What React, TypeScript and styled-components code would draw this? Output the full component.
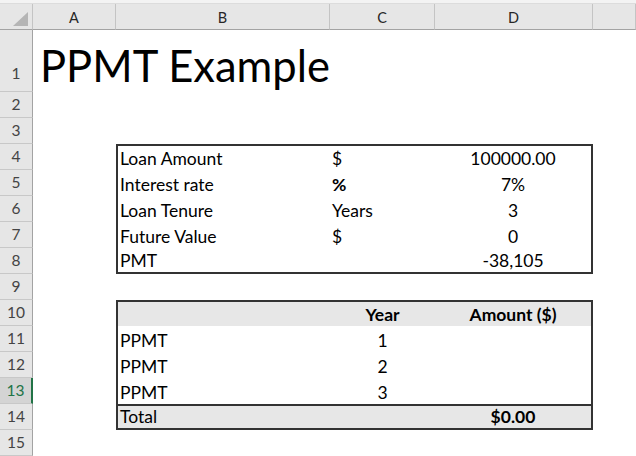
import React from 'react';
import styled, { createGlobalStyle } from 'styled-components';

const GlobalStyle = createGlobalStyle`
  html, body { margin: 0; padding: 0; background: #fff; overflow: hidden; }
  body { font-family: Lato, "Open Sans", sans-serif; }
  * { box-sizing: border-box; }
`;

const Sheet = styled.div`
  display: grid;
  grid-template-columns: 33px 83px 214px 105px 158px 1fr;
  grid-template-rows: 4px 26px 62px repeat(14, 26px);
  width: 636px;
  height: 456px;
  overflow: hidden;
  background: #fff;
`;

const TopStrip = styled.div`
  grid-column: 1 / -1;
  grid-row: 1;
  background: #f3f3f3;
  border-bottom: 1px solid #dcdcdc;
`;

const Corner = styled.div`
  grid-column: 1;
  grid-row: 2;
  background: #e6e6e6;
  border-right: 1px solid #c4c4c4;
  border-bottom: 1px solid #a3a3a3;
  display: flex;
  align-items: flex-end;
  justify-content: flex-end;
  padding: 0 4px 3px 0;
`;

const ColHead = styled.div<{ $col: number }>`
  grid-column: ${(p) => p.$col};
  grid-row: 2;
  background: #e6e6e6;
  border-right: 1px solid #c4c4c4;
  border-bottom: 1px solid #a3a3a3;
  display: flex;
  align-items: center;
  justify-content: center;
  font-size: 14.5px;
  color: #262626;
  padding-top: 1px;
`;

const RowHead = styled.div<{ $row: number; $selected?: boolean }>`
  grid-column: 1;
  grid-row: ${(p) => p.$row + 2};
  background: ${(p) => (p.$selected ? '#d4d4d4' : '#e6e6e6')};
  border-right: ${(p) => (p.$selected ? '2px solid #217346' : '1px solid #a3a3a3')};
  border-bottom: 1px solid #c8c8c8;
  display: flex;
  align-items: ${(p) => (p.$row === 1 ? 'flex-end' : 'center')};
  justify-content: center;
  padding-bottom: ${(p) => (p.$row === 1 ? '8px' : '0')};
  font-size: 15.5px;
  line-height: 1.2;
  color: ${(p) => (p.$selected ? '#217346' : '#444')};
`;

const Title = styled.h1`
  grid-column: 2 / span 3;
  grid-row: 3;
  margin: 0;
  display: flex;
  align-items: flex-end;
  padding: 0 0 1px 7px;
  font-size: 43.5px;
  font-weight: 400;
  line-height: 1.2;
  white-space: nowrap;
  color: #000;
`;

const Table = styled.div<{ $row: number }>`
  grid-column: 3 / span 3;
  grid-row: ${(p) => p.$row + 2} / span 5;
  border: 2px solid #333;
  display: grid;
  grid-template-columns: 212px 105px 156px;
  grid-template-rows: 24px 26px 26px 26px 24px;
`;

const Cell = styled.div<{ $align?: 'left' | 'center'; $bold?: boolean; $shade?: boolean; $topRule?: boolean }>`
  display: flex;
  align-items: flex-end;
  justify-content: ${(p) => (p.$align === 'center' ? 'center' : 'flex-start')};
  padding: 0 2px 1px 2px;
  font-size: 17.5px;
  line-height: 1.2;
  font-weight: ${(p) => (p.$bold ? 700 : 400)};
  background: ${(p) => (p.$shade ? '#e7e7e7' : 'transparent')};
  border-top: ${(p) => (p.$topRule ? '2px solid #333' : 'none')};
  color: #000;
  white-space: nowrap;
`;

const CornerMark = () => (
  <svg width="15" height="14" viewBox="0 0 15 14">
    <polygon points="0,14 15,14 15,0" fill="#b5b5b5" />
  </svg>
);

const info: [string, string, string, boolean?][] = [
  ['Loan Amount', '$', '100000.00'],
  ['Interest rate', '%', '7%', true],
  ['Loan Tenure', 'Years', '3'],
  ['Future Value', '$', '0'],
  ['PMT', '', '-38,105'],
];

export default function App() {
  const rows = Array.from({ length: 15 }, (_, i) => i + 1);
  return (
    <>
      <GlobalStyle />
      <Sheet>
        <TopStrip />
        <Corner>
          <CornerMark />
        </Corner>
        {['A', 'B', 'C', 'D', ''].map((c, i) => (
          <ColHead key={i} $col={i + 2}>{c}</ColHead>
        ))}
        {rows.map((r) => (
          <RowHead key={r} $row={r} $selected={r === 13}>{r}</RowHead>
        ))}
        <Title>PPMT Example</Title>

        <Table $row={4}>
          {info.map(([label, unit, value, bold]) => (
            <React.Fragment key={label}>
              <Cell>{label}</Cell>
              <Cell $bold={bold}>{unit}</Cell>
              <Cell $align="center">{value}</Cell>
            </React.Fragment>
          ))}
        </Table>

        <Table $row={10}>
          <Cell $shade />
          <Cell $shade $bold $align="center">Year</Cell>
          <Cell $shade $bold $align="center">Amount ($)</Cell>
          {[1, 2, 3].map((y) => (
            <React.Fragment key={y}>
              <Cell>PPMT</Cell>
              <Cell $align="center">{y}</Cell>
              <Cell $align="center" />
            </React.Fragment>
          ))}
          <Cell $shade $topRule>Total</Cell>
          <Cell $shade $topRule />
          <Cell $shade $topRule $bold $align="center">$0.00</Cell>
        </Table>
      </Sheet>
    </>
  );
}
